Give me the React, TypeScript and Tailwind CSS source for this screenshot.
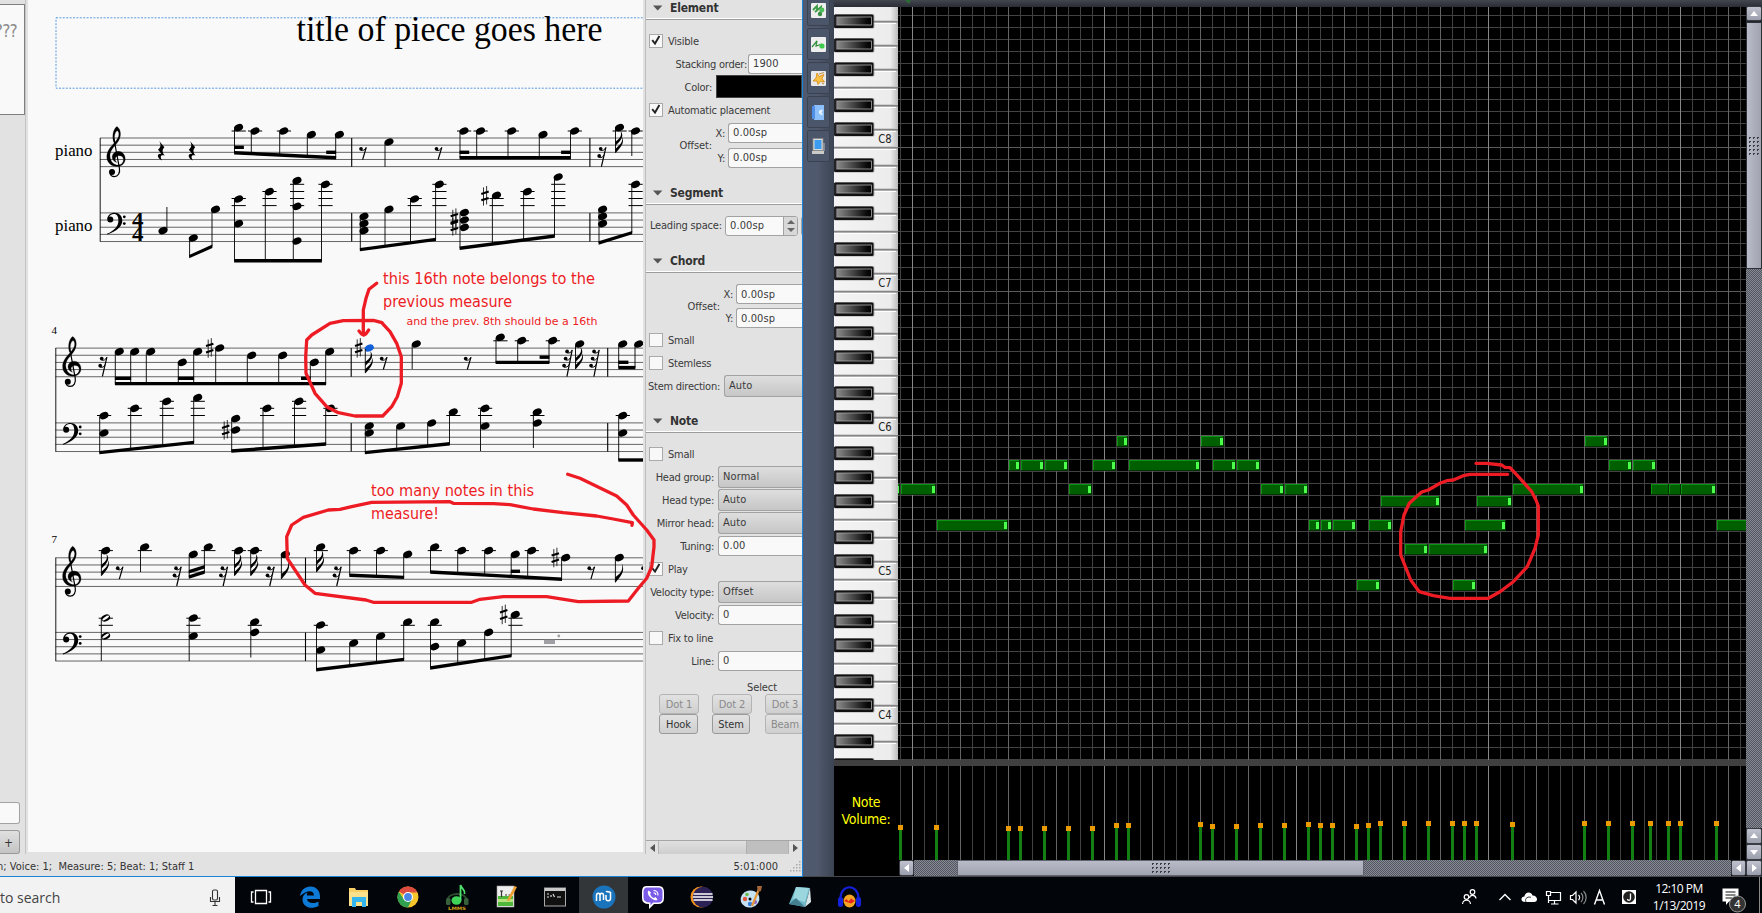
import React from "react";

type Pt = [number, number];

const UI = "font-['DejaVu_Sans_Condensed','DejaVu_Sans',sans-serif]";

/* ---------- score drawing primitives ---------- */

function Head({ x, y, c = "#000", half = false }: { x: number; y: number; c?: string; half?: boolean }) {
  if (half)
    return (
      <g transform={`translate(${x} ${y}) rotate(-22)`}>
        <ellipse rx="4.6" ry="3.3" fill="#000" />
        <ellipse rx="3.9" ry="1.3" fill="#f9f9f9" transform="rotate(-12)" />
      </g>
    );
  return <ellipse rx="4.7" ry="3.4" transform={`translate(${x} ${y}) rotate(-24)`} fill={c} />;
}

function Sharp({ x, y }: { x: number; y: number }) {
  return (
    <g transform={`translate(${x} ${y})`} stroke="#000">
      <path d="M-1.5 -8.6V9.6M1.6 -10V8.4" strokeWidth="0.8" />
      <path d="M-3.7 -2.1L3.7 -4.5M-3.7 4.3L3.7 1.9" strokeWidth="2.1" />
    </g>
  );
}

function Rest({ x, y, n }: { x: number; y: number; n: number }) {
  const h = n === 1 ? 12.7 : n === 2 ? 19.6 : 27;
  const top = 2.5 + (n - 1) * 0.6;
  const rows = Array.from({ length: n }, (_, i) => i);
  return (
    <g transform={`translate(${x} ${y})`}>
      <path d={`M${top + 0.8} 0.3L${-0.4 - (n - 1) * 0.2} ${h}`} stroke="#000" strokeWidth="1.2" />
      {rows.map((i) => {
        const dx = -i * 1.5 + (n - 1) * 0.7;
        return (
          <g key={i} transform={`translate(${dx} ${i * 7.1})`}>
            <circle cx="-2" cy="1.8" r="1.85" />
            <path d="M-2 3.2C0 4 2 3 3 0.6" fill="none" stroke="#000" strokeWidth="1" />
          </g>
        );
      })}
    </g>
  );
}

function QuarterRest({ x, y }: { x: number; y: number }) {
  return (
    <path
      transform={`translate(${x} ${y})`}
      d="M-2 -9.8L3.2 -3.6C0.6 -0.8 1.1 1.6 3.6 4.8C-0.2 3.4 -1.7 5.6 0.9 9.6C-4.8 7 -4.4 2 0.2 3L-3.2 -1C-0.2 -3.6 0 -6 -2 -9.8Z"
    />
  );
}

function Flags({ x, y, n }: { x: number; y: number; n: number }) {
  return (
    <g transform={`translate(${x} ${y})`}>
      <path d={n === 1 ? "M0 0.5V-5C3 -8 8.6 -10 6.4 -19C10 -11 6 -7 0 0.5Z" : "M0 0.5V-4C3 -7 8 -9.5 6.4 -16C9.4 -10 6 -6.6 0 0.5Z"} />
      {n === 2 && <path d="M0 -7V-11C3 -14 7 -15.5 5 -22C9 -16.5 6 -13 0 -7Z" />}
    </g>
  );
}

function Treble({ x, y }: { x: number; y: number }) {
  return (
    <g transform={`translate(${x} ${y})`} fill="none" stroke="#000" strokeLinecap="round">
      <path
        d="M6.6 15.5C4.4 7.5 7.4 1.4 9.9 0C12.6 1.6 14.2 6 13.2 10C12 15.4 8.2 18.4 5.4 22.2C3 25.6 2.6 28.6 3.2 31.4C4.2 35.8 7.4 38.4 11 38.4C14.6 38.4 16.8 35.6 16.4 32.2C16 29.6 13.6 28.6 11.2 29.2C8 30 7.2 33.4 9.8 35.8C4.8 34.6 3.6 28.4 7.6 25.8C12.8 22.8 18.2 26.6 18.2 32.2C18.2 37 14.6 39.9 10 39.9C4.2 39.9 -0.2 36 -0.2 30.2C-0.2 24.6 3.2 20.8 7.2 16.4C10.4 12.8 12 10.6 11.9 7.4C11.8 5.4 11 4.4 10.2 4.2C8 5.2 6.8 9.6 7.8 15Z"
        fill="#000"
        stroke="#000"
        strokeWidth="0.25"
      />
      <path d="M6.9 12L12.4 41.5C13.4 46.6 10.8 50 7.4 50C5.2 50 3.6 48.8 3.2 47" strokeWidth="1.2" />
      <circle cx="5" cy="45.4" r="3" fill="#000" stroke="none" />
    </g>
  );
}

function Bass({ x, y }: { x: number; y: number }) {
  return (
    <g transform={`translate(${x} ${y})`}>
      <circle cx="3.3" cy="6.6" r="3" />
      <path d="M0.4 6.4C0.4 2.2 3.6 -0.2 7.6 -0.2C12.2 -0.2 15.3 3 15.3 7.6C15.3 13.6 9.6 18.4 0.2 21.6L-0.1 20.8C7.2 17.6 11.4 13.4 11.4 7.4C11.4 3.4 10 0.9 7 0.9C4.4 0.9 2.4 2.4 1.8 4.8Z" />
      <circle cx="17.3" cy="3.8" r="1.4" />
      <circle cx="17.3" cy="10.6" r="1.4" />
    </g>
  );
}

function Staff({ x, y }: { x: number; y: number }) {
  return (
    <g stroke="#000" strokeWidth="0.6">
      {[0, 1, 2, 3, 4].map((i) => (
        <path key={i} d={`M${x} ${y + i * 7.16}H643`} />
      ))}
    </g>
  );
}

function Beam({ a, b }: { a: Pt; b: Pt }) {
  return <path d={`M${a[0] - 0.4} ${a[1] - 1.7}L${b[0] + 0.4} ${b[1] - 1.7}V${b[1] + 1.7}L${a[0] - 0.4} ${a[1] + 1.7}Z`} />;
}

type Group = { notes: [number, number, number[]][]; a: Pt; b: Pt; subs?: [number, number, number][] };

function BeamGroup({ g }: { g: Group }) {
  return (
    <g>
      {g.notes.map(([x, stem, ys], i) => {
        const end = g.a[1] + ((stem - g.a[0]) / (g.b[0] - g.a[0])) * (g.b[1] - g.a[1]);
        return (
          <g key={i}>
            {ys.map((y) => (
              <Head key={y} x={x} y={y} />
            ))}
            <path d={`M${stem} ${Math.min(...ys) + 1}V${end}`} stroke="#000" strokeWidth="0.9" />
          </g>
        );
      })}
      <Beam a={g.a} b={g.b} />
      {g.subs?.map(([x1, x2, y]) => (
        <Beam key={x1} a={[x1, y]} b={[x2, y]} />
      ))}
    </g>
  );
}

const groups: Group[] = [
  { notes: [[238.6, 234.5, [127.7]], [255, 251.3, [131]], [283.8, 279.7, [131]], [311.4, 307.3, [134.7]], [339.4, 335.7, [134.7]]], a: [234.5, 152.7], b: [335.7, 157.7], subs: [[234.5, 243.5, 147.3], [326.6, 335.7, 152.3]] },
  { notes: [[464, 460, [131]], [480.5, 476.7, [131]], [511.7, 508, [131]], [543, 539.3, [134.7]], [574.7, 570.5, [131]]], a: [460, 157.7], b: [570.5, 157.7], subs: [[460, 468.8, 152.3], [561.5, 570.5, 152.3]] },
  { notes: [[193.3, 189.6, [238]], [215.5, 212, [209.3]]], a: [189.6, 256.6], b: [212, 246.2] },
  { notes: [[238.6, 234.5, [199, 223.7]], [269.4, 265.3, [191.7]], [297, 293.3, [180.7, 206.3, 241]], [325.4, 321.5, [184.3]]], a: [234.5, 260.8], b: [321.5, 260.8] },
  { notes: [[364, 360.3, [216.3, 223.7, 230.7]], [389, 385, [209.3]], [414.6, 410.5, [199]], [439.3, 435.6, [184.3]]], a: [360.3, 249.6], b: [435.6, 239.4] },
  { notes: [[464.4, 460, [212.7, 220, 227.3]], [496.5, 492.4, [195.3]], [527.4, 523.6, [191.7]], [558.2, 554.5, [177]]], a: [460, 248.2], b: [554.5, 236] },
  { notes: [[602.6, 599, [209.3, 216.3, 223.7]], [635.5, 631.8, [184.3]]], a: [599, 243], b: [631.8, 232.6] },
  { notes: [[119.3, 115.3, [351.7]], [134.7, 130.7, [351.7]], [150.7, 146.3, [351.7]], [182.3, 178.3, [362.3]], [197.7, 193.7, [351.7]], [219.7, 215.7, [348]], [251.7, 247.3, [355.3]], [282.7, 278.7, [355.3]], [314.3, 310.3, [362.3]], [329.7, 325.7, [351.7]]], a: [115.3, 383.6], b: [325.7, 383.6], subs: [[115.3, 130.7, 378.3], [178.3, 193.7, 378.3], [301.4, 310.3, 378.3]] },
  { notes: [[500.3, 496, [337.3]], [521.7, 517.7, [340.7]], [552.7, 549, [340.7]]], a: [496, 362.4], b: [549, 362.4], subs: [[540, 549, 357.2]] },
  { notes: [[622.7, 618.7, [344]], [638.7, 635, [344]]], a: [618.7, 367.6], b: [635, 367.6], subs: [[618.7, 628, 362.3]] },
  { notes: [[104, 99.7, [415.7, 433]], [134.7, 130.7, [408.3]], [166.7, 162.7, [401.3]], [197.7, 193.7, [397.7]]], a: [99.7, 452.6], b: [193.7, 442.4] },
  { notes: [[235.7, 231.7, [418.7, 430]], [267, 263, [408.3]], [299, 294.5, [401.3]], [330.3, 325.7, [408.3]]], a: [231.7, 451], b: [325.7, 444] },
  { notes: [[369.3, 365.3, [426, 433]], [400.7, 396.7, [426]], [431.7, 427.7, [423]], [453.3, 449.5, [412]]], a: [365.3, 452.6], b: [449.5, 443.8] },
  { notes: [[622.7, 618.7, [415.7, 433]]], a: [618.7, 460], b: [643, 460] },
  { notes: [[353.7, 349.7, [550.7]], [380.7, 376.5, [550.7]], [407.7, 403.7, [554.3]]], a: [349.7, 575.3], b: [403.7, 577.4] },
  { notes: [[434.7, 430.5, [547]], [461.7, 457.7, [550.7]], [488.7, 484.7, [550.7]], [515.3, 511.2, [554.3]], [531.7, 527.7, [550.7]], [565.7, 561.6, [557.7]]], a: [430.5, 572], b: [561.6, 579.2], subs: [[511.2, 519.6, 571.3]] },
  { notes: [[193.3, 189.2, [554.3]], [208.3, 204.4, [547]]], a: [189.2, 577], b: [204.4, 572] },
  { notes: [[320.7, 316.5, [625, 650]], [353.7, 349.7, [643]], [380.7, 376.5, [636]], [407.7, 403.7, [622]]], a: [316.5, 669.8], b: [403.7, 659.4] },
  { notes: [[434.7, 430.5, [622, 646.7]], [461.7, 457.7, [643]], [488.7, 484.7, [632.3]], [515.3, 511.2, [614.7]]], a: [430.5, 668], b: [511.2, 655.6] },
];

/* x, stem x, head ys, stem end, flag count */
const singles: [number, number, number[], number, number][] = [
  [389, 385, [142], 166.7, 0],
  [619.5, 615.5, [127.7], 152.7, 2],
  [635.5, 631.8, [131], 156, 0],
  [416.3, 412.2, [344], 369, 0],
  [579.7, 575.5, [344], 369, 2],
  [485, 480.5, [408.3, 426], 451, 0],
  [537.3, 533.4, [412, 423], 448, 0],
  [105.7, 101.4, [550.7], 575.7, 2],
  [144.7, 140.5, [547], 572, 0],
  [238.7, 234.5, [550.7], 575.7, 2],
  [254.7, 250.7, [550.7], 575.7, 2],
  [285.3, 281.4, [554.3], 579, 1],
  [320.7, 316.5, [547], 572, 2],
  [619.3, 615.4, [557.7], 582.3, 1],
  [193.3, 189.2, [618, 636], 661, 0],
  [254.7, 250.8, [622, 632.3], 657.5, 0],
];

/* centre x, ledger ys */
const ledgers: [number, number[]][] = [
  [238.6, [131]], [255, [131]], [283.8, [131]], [464, [131]], [480.5, [131]], [511.7, [131]], [574.7, [131]], [619.5, [131]], [635.5, [131]],
  [238.6, [198.5, 205.6]], [269.4, [191.5, 198.5, 205.6]], [297, [184.3, 191.5, 198.5, 205.6]], [325.4, [184.3, 191.5, 198.5, 205.6]],
  [414.6, [198.5, 205.6]], [439.3, [184.3, 191.5, 198.5, 205.6]], [496.5, [198.5, 205.6]], [527.4, [191.5, 198.5, 205.6]], [558.2, [184.3, 191.5, 198.5, 205.6]], [635.5, [184.3, 191.5, 198.5, 205.6]],
  [500.3, [340.8]], [521.7, [340.8]], [552.7, [340.8]],
  [104, [415.5]], [134.7, [408.3, 415.5]], [166.7, [401.3, 408.3, 415.5]], [197.7, [401.3, 408.3, 415.5]], [267, [408.3, 415.5]], [299, [401.3, 408.3, 415.5]], [330.3, [408.3, 415.5]],
  [453.3, [415.5]], [485, [408.3, 415.5]], [537.3, [415.5]], [622.7, [415.5]],
  [105.7, [550.6]], [144.7, [550.6]], [208.3, [550.6]], [238.7, [550.6]], [254.7, [550.6]], [320.7, [550.6]], [353.7, [550.6]], [380.7, [550.6]], [434.7, [550.6]], [461.7, [550.6]], [488.7, [550.6]], [531.7, [550.6]],
  [105.7, [618.2, 625.3]], [193.3, [618.2, 625.3]], [254.7, [625.3]], [320.7, [625.3]], [407.7, [625.3]], [434.7, [625.3]], [515.3, [618.2, 625.3]],
];

function Score() {
  return (
    <svg width="615" height="852" viewBox="28 0 615 852" className="block bg-[#f9f9f9]">
      <rect x="56" y="17.8" width="700" height="70.4" fill="none" stroke="#5b9ce0" strokeWidth="1" strokeDasharray="2 1.4" />
      <g fontFamily="Liberation Serif, serif">
        <text x="296.5" y="40.6" fontSize="35" textLength="306" lengthAdjust="spacingAndGlyphs">title of piece goes here</text>
        <text x="55" y="156" fontSize="17.5" textLength="37.5" lengthAdjust="spacingAndGlyphs">piano</text>
        <text x="55" y="231" fontSize="17.5" textLength="37.5" lengthAdjust="spacingAndGlyphs">piano</text>
        <text x="51.5" y="333.6" fontSize="11">4</text>
        <text x="51.5" y="543.2" fontSize="11">7</text>
        <text x="132" y="227" fontSize="21.5" fontWeight="bold" textLength="11.5" lengthAdjust="spacingAndGlyphs">4</text>
        <text x="132" y="241.4" fontSize="21.5" fontWeight="bold" textLength="11.5" lengthAdjust="spacingAndGlyphs">4</text>
      </g>
      <Staff x={100} y={138} />
      <Staff x={100} y={212.9} />
      <Staff x={55.5} y={348.1} />
      <Staff x={55.5} y={422.9} />
      <Staff x={55.5} y={557.8} />
      <Staff x={55.5} y={632.4} />
      <path d="M100.2 138V241.6M55.8 348V451.6M55.8 557.7V661" stroke="#000" strokeWidth="0.9" />
      <path d="M351.7 138V166.7M351.7 212.9V241.6M589.9 138V166.7M589.9 212.9V241.6M351.2 348V376.8M351.2 422.9V451.6M607.7 348V376.8M607.7 422.9V451.6M305.5 557.8V586.4M305.5 632.4V661" stroke="#000" strokeWidth="1.1" />
      <Treble x={107} y={126.6} />
      <Treble x={62.8} y={336.4} />
      <Treble x={62.8} y={546.2} />
      <Bass x={107} y={213} />
      <Bass x={62.9} y={423.2} />
      <Bass x={62.9} y={632.8} />
      <g stroke="#000" strokeWidth="1">
        {ledgers.map(([x, ys], i) => (
          <path key={i} d={ys.map((y) => `M${x - 7} ${y}H${x + 7.2}`).join("")} />
        ))}
      </g>
      {groups.map((g, i) => (
        <BeamGroup key={i} g={g} />
      ))}
      <Beam a={[189.2, 571.8]} b={[204.4, 566.8]} />
      {singles.map(([x, sx, ys, end, fl], i) => (
        <g key={i}>
          {ys.map((y) => (
            <Head key={y} x={x} y={y} />
          ))}
          <path d={`M${sx} ${ys[0] + 1}V${end}`} stroke="#000" strokeWidth="0.9" />
          {fl > 0 && <Flags x={sx} y={end} n={fl} />}
        </g>
      ))}
      <Head x={163} y={230.7} />
      <path d="M166.9 230V207" stroke="#000" strokeWidth="0.9" />
      <Head x={369.3} y={348} c="#0f5fdc" />
      <path d="M365.3 349V373" stroke="#000" strokeWidth="0.9" />
      <Flags x={365.3} y={373} n={2} />
      <Head x={105.7} y={618} half />
      <Head x={105.7} y={636} half />
      <path d="M101.3 619V661" stroke="#000" strokeWidth="0.9" />
      {([[485, 196], [454.3, 218.4], [454.3, 226], [209.7, 348.2], [358.7, 348], [225.7, 430], [555.3, 557.7], [503.7, 614.6]] as Pt[]).map(([x, y], i) => (
        <Sharp key={i} x={x} y={y} />
      ))}
      <QuarterRest x={161.2} y={150.8} />
      <QuarterRest x={192} y={150.8} />
      {([[363, 147, 1], [438.5, 147, 1], [602, 147, 2], [103, 356.8, 2], [383.7, 356.8, 1], [467.7, 356.8, 1], [567.7, 349.6, 3], [594.7, 349.6, 3], [119.7, 566.4, 1], [177.3, 566.4, 2], [223.7, 566.4, 2], [270.3, 566.4, 2], [337.3, 566.4, 2], [591.3, 566.4, 1], [645, 566.4, 1]] as [number, number, number][]).map(([x, y, n], i) => (
        <Rest key={i} x={x} y={y} n={n} />
      ))}
      <rect x="544" y="639.8" width="11" height="4.2" fill="#a0a0a4" />
      <circle cx="558.8" cy="636" r="1.4" fill="#a0a0a4" />
    </svg>
  );
}

/* ---------- inspector ---------- */

function Header({ title, className }: { title: string; className: string }) {
  return (
    <div className={`flex h-[22px] shrink-0 flex-col ${className}`}>
      <div className="flex h-5 items-center pl-[7px]">
        <svg width="10" height="6" className="mr-[7px]"><path d="M0 0.5H9.4L4.7 5.5Z" fill="#555" /></svg>
        <span className="text-[12px] font-bold leading-5 tracking-[-0.2px] text-[#333]">{title}</span>
      </div>
      <div className="h-px bg-white" />
      <div className="h-px bg-[#9c9c9c]" />
    </div>
  );
}

function Check({ label, on = false, className = "" }: { label: string; on?: boolean; className?: string }) {
  return (
    <div className={`flex h-[23px] shrink-0 items-center pl-[3px] ${className}`}>
      <span className="flex size-[14px] items-center justify-center border border-[#aaa] bg-[#f8f8f8]">
        {on && (
          <svg width="10" height="11" viewBox="0 0 10 11"><path d="M1.2 5.2L4 8.6L8.4 1" fill="none" stroke="#222" strokeWidth="1.9" /></svg>
        )}
      </span>
      <span className="ml-[5px] whitespace-pre pt-[2px] tracking-[-0.22px]">{label}</span>
    </div>
  );
}

function Field({ value, combo = false }: { value: string; combo?: boolean }) {
  return (
    <div
      className={
        combo
          ? "flex h-[22px] flex-1 items-center rounded-l-[3px] border border-r-0 border-[#a2a2a2] bg-gradient-to-b from-[#dedede] to-[#c6c6c6] pl-1"
          : "flex h-5 flex-1 items-center rounded-l-[3px] border border-r-0 border-[#a2a2a2] bg-[#f9f9f9] pl-1"
      }
    >
      <span className="whitespace-pre pt-px tracking-[0.1px]">{value}</span>
    </div>
  );
}

function Row({ label, w, children, className = "" }: { label: string; w: string; children?: React.ReactNode; className?: string }) {
  return (
    <div className={`flex h-[23px] shrink-0 items-center ${className}`}>
      <span className={`shrink-0 whitespace-nowrap pt-[2px] text-right tracking-[-0.25px] ${w}`}>{label}</span>
      {children}
    </div>
  );
}

function Btn({ t, className, off = false }: { t: string; className: string; off?: boolean }) {
  return (
    <span className={`flex h-5 shrink-0 items-center justify-center rounded-[3px] border bg-gradient-to-b from-[#e2e2e2] to-[#cfcfcf] pt-px ${off ? "border-[#b4b4b4] text-[#8a8a8a]" : "border-[#999] text-[#333]"} ${className}`}>{t}</span>
  );
}

function Inspector() {
  return (
    <div className="flex h-[854px] w-[157px] shrink-0 flex-col overflow-hidden border-l border-[#bdbdbd] bg-[#e2e2e2] text-[11px] leading-[14px] tracking-[-0.1px] text-[#3a3a3a]">
      <Header title="Element" className="-mt-[2px]" />
      <Check label="Visible" on className="mt-[9px]" />
      <Row label="Stacking order:" w="w-[101px] mr-px"><Field value="1900" /></Row>
      <Row label="Color:" w="w-[66px] mr-1"><div className="h-[23px] flex-1 border border-[#444] bg-black" /></Row>
      <Check label="Automatic placement" on />
      <div className="-mt-px flex h-[50px] shrink-0 items-center">
        <span className="w-[66px] shrink-0 pt-[2px] text-right">Offset:</span>
        <div className="flex flex-1 flex-col">
          <Row label="X:" w="w-[13px] mr-[3px]" className="mb-px mt-px"><Field value="0.00sp" /></Row>
          <Row label="Y:" w="w-[13px] mr-[3px]" className="mb-px mt-px"><Field value="0.00sp" /></Row>
        </div>
      </div>
      <Header title="Segment" className="mt-[13px]" />
      <div className="mt-[9px] flex h-[23px] shrink-0 items-center pl-1">
        <span className="w-[71px] shrink-0 whitespace-nowrap pt-px text-right tracking-[-0.2px]">Leading space:</span>
        <div className="ml-1 flex h-5 w-[73px] shrink-0 items-stretch overflow-hidden rounded-[3px] border border-[#a2a2a2] bg-[#f9f9f9]">
          <span className="flex flex-1 items-center pl-1 pt-px tracking-[0.1px]">0.00sp</span>
          <span className="flex w-[14px] flex-col items-center justify-center gap-[4px] border-l border-[#a2a2a2] bg-[#d8d8d8]">
            <svg width="8" height="4"><path d="M0 4H8L4 0Z" fill="#666" /></svg>
            <svg width="8" height="4"><path d="M0 0H8L4 4Z" fill="#666" /></svg>
          </span>
        </div>
        <div className="ml-[3px] h-5 w-3 shrink-0 rounded-l-[3px] border border-[#a2a2a2] bg-[#ddd]" />
      </div>
      <Header title="Chord" className="mt-[14px]" />
      <div className="mt-[9px] flex h-12 shrink-0 items-center">
        <span className="w-[74px] shrink-0 pt-px text-right">Offset:</span>
        <div className="flex flex-1 flex-col gap-px">
          <Row label="X:" w="w-[13px] mr-[3px]"><Field value="0.00sp" /></Row>
          <Row label="Y:" w="w-[13px] mr-[3px]"><Field value="0.00sp" /></Row>
        </div>
      </div>
      <Check label="Small" className="-mt-[2px]" />
      <Check label="Stemless" />
      <Row label="Stem direction:" w="w-[74px] mr-1"><Field combo value="Auto" /></Row>
      <Header title="Note" className="mt-[14px]" />
      <Check label="Small" className="mt-[9px]" />
      <Row label="Head group:" w="w-[68px] mr-1"><Field combo value="Normal" /></Row>
      <Row label="Head type:" w="w-[68px] mr-1"><Field combo value="Auto" /></Row>
      <Row label="Mirror head:" w="w-[68px] mr-1"><Field combo value="Auto" /></Row>
      <Row label="Tuning:" w="w-[68px] mr-1"><Field value="0.00" /></Row>
      <Check label="Play" on />
      <Row label="Velocity type:" w="w-[68px] mr-1"><Field combo value="Offset" /></Row>
      <Row label="Velocity:" w="w-[68px] mr-1"><Field value="0" /></Row>
      <Check label="Fix to line" />
      <Row label="Line:" w="w-[68px] mr-1"><Field value="0" /></Row>
      <div className="mt-[9px] h-[13px] shrink-0 pl-[101px]">Select</div>
      <div className="flex h-5 shrink-0 pl-[13px]">
        <Btn t="Dot 1" off className="mr-[13px] w-10" />
        <Btn t="Dot 2" off className="mr-[13px] w-10" />
        <Btn t="Dot 3" off className="w-10" />
      </div>
      <div className="flex h-5 shrink-0 pl-[13px]">
        <Btn t="Hook" className="mr-[14px] w-[39px]" />
        <Btn t="Stem" className="mr-[15px] w-[38px]" />
        <Btn t="Beam" off className="w-10" />
      </div>
      <div className="flex-1" />
      <div className="flex h-[14px] shrink-0 border-t border-[#a6a6a6]">
        <span className="flex w-[13px] items-center justify-center border-r border-[#b4b4b4]"><svg width="5" height="8"><path d="M5 0V8L0 4Z" fill="#555" /></svg></span>
        <span className="w-[88px] border-r border-[#b0b0b0] bg-gradient-to-b from-[#e0e0e0] to-[#cecece]" />
        <span className="flex-1 bg-[#bfbfbf]" />
        <span className="flex w-[14px] items-center justify-center border-l border-[#b4b4b4]"><svg width="5" height="8"><path d="M0 0V8L5 4Z" fill="#555" /></svg></span>
      </div>
    </div>
  );
}

/* ---------- piano roll ---------- */

const rollNotes: [number, number, number, boolean][] = [
  [890, 900, 484, true], [901, 936, 484, true], [937, 1008, 520, true], [1009, 1020, 460, true], [1021, 1044, 460, true], [1045, 1068, 460, true],
  [1069, 1092, 484, true], [1093, 1116, 460, true], [1117, 1128, 436, true], [1129, 1200, 460, true], [1201, 1224, 436, true], [1213, 1236, 460, true],
  [1237, 1260, 460, true], [1261, 1284, 484, true], [1285, 1308, 484, true], [1309, 1320, 520, true], [1321, 1332, 520, true], [1333, 1356, 520, true],
  [1357, 1380, 580, true], [1369, 1392, 520, true], [1381, 1440, 496, true], [1405, 1428, 544, true], [1429, 1488, 544, true], [1453, 1476, 580, true],
  [1465, 1506, 520, true], [1477, 1512, 496, true], [1513, 1584, 484, true], [1585, 1608, 436, true], [1609, 1632, 460, true], [1633, 1656, 460, true],
  [1651, 1669, 484, false], [1669, 1681, 484, false], [1681, 1716, 484, true], [1717, 1790, 520, true],
];

const volumes: Pt[] = [
  [900, 827], [936, 827], [1008, 828], [1020, 828], [1044, 828], [1068, 828], [1092, 828], [1116, 825], [1128, 825], [1200, 824], [1212, 826], [1236, 826],
  [1260, 825], [1284, 825], [1308, 824], [1320, 825], [1332, 825], [1356, 826], [1368, 825], [1380, 823], [1404, 823], [1428, 823], [1452, 823], [1464, 823],
  [1476, 823], [1512, 824], [1584, 823], [1608, 823], [1632, 823], [1650, 823], [1668, 823], [1680, 823], [1716, 823],
];

const vlines = Array.from({ length: 71 }, (_, i) => 900 + i * 12);
const vcol = (x: number) => ((x - 912) % 192 === 0 ? "#868686" : (x - 912) % 48 === 0 ? "#646464" : "#424242");

function Keyboard() {
  const octs = [-141, 3, 147, 291, 435, 579, 723];
  return (
    <svg width="64" height="753" viewBox="834 7 64 753" className="block shrink-0">
      <defs>
        <linearGradient id="wk"><stop offset="0" stopColor="#f4f4f4" /><stop offset="0.88" stopColor="#ececec" /><stop offset="1" stopColor="#bcbcbc" /></linearGradient>
        <linearGradient id="bk"><stop offset="0" stopColor="#8c8c8c" /><stop offset="0.85" stopColor="#0c0c0c" /><stop offset="1" stopColor="#000" /></linearGradient>
      </defs>
      <rect x="834" y="0" width="64" height="760" fill="url(#wk)" />
      {octs.map((o) => (
        <g key={o}>
          {[0, 18, 42, 66, 84, 102, 126].map((d) => (
            <g key={d}>
              <rect x="834" y={o + d - 0.7} width="63" height="1" fill="#c4c4c4" />
              <rect x="834" y={o + d} width="64" height="1.6" fill="#858585" />
              <rect x="834" y={o + d + 2} width="62" height="1" fill="#fff" />
            </g>
          ))}
          {[18, 42, 66, 102, 126].map((d) => (
            <g key={d}>
              <rect x="834" y={o + d - 7} width="40.4" height="14.6" rx="1.5" fill="#777" opacity="0.6" />
              <rect x="834" y={o + d - 6.5} width="39.5" height="13.5" rx="1.5" fill="#111" />
              <rect x="836.5" y={o + d - 4} width="35" height="8" fill="url(#bk)" stroke="#a9a9a9" strokeWidth="0.8" />
              <rect x="834" y={o + d - 5.5} width="2.4" height="11" fill="#222" />
            </g>
          ))}
        </g>
      ))}
      {[8, 7, 6, 5, 4].map((n, i) => (
        <text key={n} x="878.2" y={143.4 + i * 144} fontSize="12" fill="#222" fontFamily="DejaVu Sans Condensed, sans-serif" textLength="13.4" lengthAdjust="spacingAndGlyphs">{"C" + n}</text>
      ))}
    </svg>
  );
}

function Roll() {
  return (
    <svg width="848" height="753" viewBox="898 7 848 753" className="block shrink-0 bg-black" shapeRendering="crispEdges">
      {Array.from({ length: 64 }, (_, i) => 3 + i * 12).map((y) => (
        <rect key={y} x="898" y={y} width="848" height="1" fill={(y - 3) % 144 === 0 ? "#5c5c5c" : "#424242"} />
      ))}
      {vlines.map((x) => (
        <rect key={x} x={x} y="7" width="1" height="753" fill={vcol(x)} />
      ))}
      {rollNotes.map(([a, b, y, end], i) => (
        <g key={i}>
          <rect x={a} y={y} width={b - a} height="11" fill="#033003" />
          <rect x={a} y={y} width={b - a - 1} height="10" fill="#0a9410" />
          <rect x={a + 1} y={y + 1} width={b - a - 2} height="9" fill="#006000" />
          {end && <rect x={b - 4} y={y + 2} width="3" height="7" fill="#4cff4c" />}
        </g>
      ))}
    </svg>
  );
}

function Volumes() {
  return (
    <svg width="848" height="94" viewBox="898 766 848 94" className="block shrink-0 bg-black" shapeRendering="crispEdges">
      {vlines.map((x) => (
        <rect key={x} x={x} y="766" width="1" height="94" fill={vcol(x)} />
      ))}
      {volumes.map(([x, y]) => (
        <g key={x}>
          <rect x={x - 1} y={y} width="3" height={860 - y} fill="#148014" />
          <rect x={x - 2} y={y - 2} width="5" height="5" fill="#eb9b00" />
        </g>
      ))}
    </svg>
  );
}

const DITHER = "bg-[#7f828c] bg-[repeating-conic-gradient(#868a95_0_25%,#53565e_0_50%)] bg-[length:2px_2px]";

function Arrow({ d, className }: { d: string; className: string }) {
  return (
    <span className={`flex shrink-0 items-center justify-center rounded-[2px] border border-[#3a3c44] bg-gradient-to-b from-[#c0c2ce] to-[#9b9eac] ${className}`}>
      <svg width="8" height="8"><path d={d} fill="#fff" /></svg>
    </span>
  );
}

function Grip({ cols, rows }: { cols: number; rows: number }) {
  return (
    <svg width={cols * 4} height={rows * 4} shapeRendering="crispEdges">
      {Array.from({ length: cols * rows }, (_, i) => (
        <path key={i} transform={`translate(${(i % cols) * 4 + 1} ${Math.floor(i / cols) * 4 + 1})`} d="M0 0H2V1H1V2H0Z" fill="#3a3c44" />
      ))}
    </svg>
  );
}

const LEFT = "M6 0V8L1 4Z";
const RIGHT = "M2 0V8L7 4Z";
const UP = "M0 6H8L4 1Z";
const DOWN = "M0 2H8L4 7Z";

function SideButton({ children, className = "" }: { children: React.ReactNode; className?: string }) {
  return <div className={`flex h-8 w-[23px] shrink-0 items-center justify-center rounded-[2px] border border-[#3a4252] bg-[#4c566a] ${className}`}>{children}</div>;
}

function Daw() {
  return (
    <div className="flex h-[877px] w-[959px] shrink-0 border-b border-[#45454a] bg-black">
      <div className="flex w-[31px] shrink-0 flex-col items-center gap-[2px] overflow-hidden bg-gradient-to-r from-[#4f5a70] via-[#4f586c] to-[#3b4452] pr-px">
        <SideButton className="-mt-[6px]">
          <svg width="15" height="15"><rect width="15" height="15" rx="1" fill="#eee" /><path d="M2 7L6 3V8M4 9L10 4L9 12" stroke="#3c9a45" strokeWidth="1.8" fill="none" /><circle cx="11" cy="7" r="2.4" fill="#4fbf5a" /><circle cx="9" cy="11" r="2.2" fill="#388f42" /></svg>
        </SideButton>
        <SideButton>
          <svg width="15" height="15"><rect width="15" height="15" rx="1" fill="#eee" /><path d="M1 10L6 4L5 9L11 7" stroke="#2e8f3a" strokeWidth="1.2" fill="none" /><circle cx="11" cy="9" r="2.6" fill="#3ecb4c" /></svg>
        </SideButton>
        <SideButton>
          <svg width="15" height="15"><rect width="15" height="15" rx="1" fill="#e8e8ea" /><path d="M6 2L8 5.5L13 3.5L11 7.5L13.5 11L9.5 10.5L7 13.5L6 10L2 10L5 7Z" fill="#f9bf45" stroke="#d58a12" strokeWidth="0.8" /><path d="M8 3L13 1.500M11 12L13 13" stroke="#b07a20" strokeWidth="0.8" /></svg>
        </SideButton>
        <SideButton>
          <svg width="15" height="17"><path d="M3 1H13V16H3Z" fill="#8dc0fa" /><path d="M1 2H4V15H1Z" fill="#4f8fe8" /><path d="M12 6C7 4 6 11 12 11L10.500 8.500Z" fill="#e6f2ff" /></svg>
        </SideButton>
        <SideButton>
          <svg width="15" height="17"><rect x="2" y="0.5" width="10" height="12" fill="#d9dbd8" stroke="#888" strokeWidth="0.8" /><rect x="3.5" y="2" width="7" height="9" fill="#3c9cf2" /><rect x="1" y="13" width="12" height="3" fill="#c9cbc8" /><path d="M13 5V13" stroke="#bbb" /></svg>
        </SideButton>
      </div>
      <div className="flex w-[928px] shrink-0 flex-col">
        <div className="flex h-[7px] shrink-0 justify-start bg-gradient-to-b from-[#43454f] to-[#2b2d36] pl-[71px]">
          <svg width="6" height="4"><path d="M0 0H6L4 4Z" fill="#2a6a35" /></svg>
        </div>
        <div className="flex h-[869px] shrink-0">
          <div className="flex w-[912px] shrink-0 flex-col">
            <div className="flex h-[753px] shrink-0"><Keyboard /><Roll /></div>
            <div className="h-[6px] shrink-0 bg-[#404040]" />
            <div className="flex h-[110px] shrink-0">
              <div className="flex w-16 shrink-0 flex-col items-center pt-[28px] text-center text-[14px] leading-[17px] tracking-[-0.3px] text-[#ff0]">
                <span>Note</span><span>Volume:</span>
              </div>
              <div className="flex w-[848px] shrink-0 flex-col">
                <Volumes />
                <div className="flex h-4 pl-px">
                  <Arrow d={LEFT} className="h-4 w-[15px]" />
                  <span className={`w-[43px] ${DITHER}`} />
                  <span className="flex w-[407px] items-center justify-center border border-[#60636e] bg-gradient-to-b from-[#b9bbc9] to-[#a0a3b0]">
                    <Grip cols={5} rows={3} />
                  </span>
                  <span className={`flex-1 ${DITHER}`} />
                  <Arrow d={LEFT} className="h-4 w-[15px]" />
                </div>
              </div>
            </div>
          </div>
          <div className="flex w-4 shrink-0 flex-col bg-[#24262e]">
            <Arrow d={UP} className="-mt-px h-[15px] w-4" />
            <div className="mt-px flex h-[247px] shrink-0 items-center justify-center border border-[#2e3038] bg-gradient-to-r from-[#b9bbc9] to-[#a0a3b0]">
              <Grip cols={3} rows={5} />
            </div>
            <div className={`flex-1 ${DITHER}`} />
            <Arrow d={UP} className="h-4 w-4" />
            <Arrow d={DOWN} className="h-4 w-4" />
            <Arrow d={RIGHT} className="h-4 w-4" />
          </div>
        </div>
      </div>
    </div>
  );
}

/* ---------- taskbar ---------- */

function TaskIcon({ children, active = false }: { children: React.ReactNode; active?: boolean }) {
  return (
    <span className={`flex h-9 w-[49px] shrink-0 items-center justify-center pt-1 ${active ? "bg-[#333639]" : ""}`}>
      <svg width="26" height="26" viewBox="0 0 26 26">{children}</svg>
    </span>
  );
}

function Taskbar() {
  return (
    <div className="flex h-9 bg-[#02050a] text-white">
      <div className="mr-px flex w-[235px] shrink-0 items-center bg-[#f2f2f2] pt-[5px] text-[#444]">
        <span className="w-[208px] font-['Open_Sans',sans-serif] text-[14px] tracking-[0px]">to search</span>
        <svg width="14" height="18" viewBox="0 0 14 18" fill="none" stroke="#333" strokeWidth="1.1"><rect x="4.5" y="1" width="5" height="10" rx="1.5" /><path d="M2.500 8V12.500H11.500V8M7 13V16.500M4.500 16.500H9.500" /></svg>
      </div>
      <TaskIcon><path d="M7.500 6.500H18.500V19.500H7.500ZM5.500 8H3.500V18H5.500M20.500 8H22.500V18H20.500" fill="none" stroke="#fff" strokeWidth="1.3" /></TaskIcon>
      <TaskIcon><path d="M3 12C4 6 8 2.500 13.500 2.500C19.500 2.500 23 7 23 12.500V15H10C10.500 19 16 20.500 21.500 17.500V22C14 26 5.500 23 5.500 15.500C5.500 12 7.500 9.500 10.500 8.500C10 9.500 9.800 10.500 9.800 11.500H17C17 6 10 5.500 3 12Z" fill="#0d7ad8" /></TaskIcon>
      <TaskIcon><path d="M3 4H9L10 6H22V22H3Z" fill="#f7cf64" /><path d="M3 8H22V22H3Z" fill="#fbe08b" /><path d="M6 13H20V23H16V18H10V23H6Z" fill="#35b5ee" /></TaskIcon>
      <TaskIcon><circle cx="13" cy="13" r="10.5" fill="#f5c52b" /><path d="M13 13L4 7.500A10.500 10.500 0 0 1 22.500 8.500H13Z" fill="#dd4b3e" /><path d="M3.800 7.800A10.500 10.500 0 0 0 13 23.500L17 15L9 15.500Z" fill="#2fa04f" /><circle cx="13" cy="13" r="5" fill="#fff" /><circle cx="13" cy="13" r="3.9" fill="#4a86e8" /></TaskIcon>
      <TaskIcon><path d="M3.500 16C4 8 22 8 22.500 16" fill="none" stroke="#2d4a2f" strokeWidth="1.8" /><rect x="2" y="14" width="4.500" height="7" rx="1.5" fill="#39603c" /><rect x="20" y="14" width="4.500" height="7" rx="1.5" fill="#39603c" /><ellipse cx="12.500" cy="16.500" rx="5" ry="4.200" fill="#3fd35a" /><path d="M16.500 16V1C17.500 5 21.500 5 20.500 10" fill="none" stroke="#4fe26a" strokeWidth="1.8" /><text x="4" y="25.500" fontSize="4.500" fontWeight="bold" fill="#d8a21a" fontFamily="DejaVu Sans, sans-serif" textLength="18" lengthAdjust="spacingAndGlyphs">LMMS</text></TaskIcon>
      <TaskIcon><rect x="4" y="2" width="17" height="21" fill="#eee" stroke="#999" strokeWidth="0.6" /><rect x="5" y="12" width="15" height="10" fill="#4fb83a" /><rect x="5" y="15" width="15" height="3" fill="#b5e27c" /><path d="M8.500 7V13M7 7H10M12 11H14M15.500 11H17.500" stroke="#333" strokeWidth="1.2" /><path d="M14.500 15L21.500 2L24 3L17 16L14.500 17.500Z" fill="#f0a030" /></TaskIcon>
      <TaskIcon><rect x="2.5" y="4" width="21" height="18" fill="#111" stroke="#aaa" /><rect x="3" y="4" width="20" height="3" fill="#c9c9c9" /><path d="M5 10H7M5 13H7M9 11V13M11 10L12.500 13M15 13H19" stroke="#ddd" strokeWidth="1.2" /></TaskIcon>
      <TaskIcon active><circle cx="13" cy="13" r="11.5" fill="#1a74bb" /><path d="M5.500 17V11.500C5.500 8.500 9 8.500 9 11.500V17M9 11.500C9 8.500 12.500 8.500 12.500 11.500V16M15 11V14.500C15 17.500 19.500 17.500 19.500 14.500V8.500C18 7 15.500 8.500 15.200 7" fill="none" stroke="#fff" strokeWidth="1.5" /></TaskIcon>
      <TaskIcon><path d="M6 2H19Q24 2 24 8V14Q24 20 18 20H14L9 25V20Q2 20 2 14V8Q2 2 6 2Z" fill="#fff" /><path d="M7 3.500H18.500Q22.500 3.500 22.500 8V14Q22.500 18.500 18 18.500H13L10.500 21.500V18.500Q3.500 18.500 3.500 13.500V8Q3.500 3.500 7 3.500Z" fill="#7a5be8" /><path d="M8.500 6.500C7 8 8 11.500 11 14C14 16.500 16.500 17 17.500 15.500L15.500 13L14 14C12 13.500 10.500 11.500 10.200 10L11 8.500Z" fill="#fff" /><path d="M13.500 6.500C16.500 6.500 18 8.500 18 11.500M13.500 8.700C15 8.700 15.800 9.600 15.800 11" fill="none" stroke="#fff" strokeWidth="1.1" /></TaskIcon>
      <TaskIcon><circle cx="12" cy="13" r="10.5" fill="#f7941e" /><circle cx="14" cy="13" r="10.3" fill="#2c2255" /><path d="M4.500 10H23.500M3.800 13H24M4.500 16H23.500" stroke="#fff" strokeWidth="1.5" /></TaskIcon>
      <TaskIcon><ellipse cx="12" cy="15" rx="9.5" ry="8.5" fill="#c6e2f2" transform="rotate(-15 12 15)" /><circle cx="7" cy="15" r="2.2" fill="#e2573c" /><circle cx="9" cy="10.5" r="1.8" fill="#6dbb4c" /><circle cx="12" cy="20" r="2.2" fill="#3a7bd5" /><circle cx="17" cy="18" r="2" fill="#8a5ac8" /><circle cx="12" cy="15" r="1.5" fill="#02050a" /><path d="M14 22L21 5" stroke="#e5983a" strokeWidth="2.2" /><path d="M20 8L19 2L24 2L23 7Z" fill="#a5673a" /></TaskIcon>
      <TaskIcon><path d="M9 3L23 4L18 23L2 20Z" fill="#6fb9c9" /><path d="M9 3L22 4L18 18L6 15Z" fill="#9bd5de" /><path d="M23 4L24 18L18 23Z" fill="#d8e8ea" /><path d="M2 20L9 14L18 23Z" fill="#447f90" /></TaskIcon>
      <TaskIcon><ellipse cx="13.5" cy="17" rx="6" ry="6.5" fill="#f5a623" /><path d="M8 17L10.500 15L12.500 17.500L15 14.500L19 17L15 19.500Z" fill="#e8251c" /><path d="M4.500 16C3.500 -1 23.500 -1 22.500 16" fill="none" stroke="#1420d8" strokeWidth="2.2" /><rect x="2" y="13" width="5" height="10" rx="2.5" fill="#1522dd" /><rect x="20" y="13" width="5" height="10" rx="2.5" fill="#1522dd" /></TaskIcon>
      <div className="flex-1" />
      <svg width="185" height="36" viewBox="1455 877 185 36" className="shrink-0" fill="none" stroke="#fff" strokeWidth="1.2">
        <circle cx="1471.5" cy="892" r="2.3" /><circle cx="1465.5" cy="897" r="2.3" /><path d="M1468.500 898C1469 894.500 1474.500 894.500 1475 898.500M1461.500 904C1462 899 1469 899 1469.500 904" />
        <path d="M1498.500 900L1504 894.500L1509.500 900" strokeWidth="1.4" />
        <path d="M1524.500 902C1519 902 1519.500 896.500 1523.500 896.500C1524 891.500 1530.500 891.500 1531.500 895.500C1537 895.500 1537.500 902 1533 902Z" fill="#fff" stroke="none" /><path d="M1525 902C1523 898 1528 896 1530 897.500" stroke="#02050a" strokeWidth="0.8" />
        <path d="M1549.500 892.500H1559.500V900.500H1547.500M1553.500 900.500V904M1550 904H1557.500M1545.500 891.500H1549.500V895.500H1545.500ZM1547.500 895.500V903" />
        <path d="M1569.500 895.500H1571.500L1575 892V903L1571.500 899.500H1569.500Z" />
        <path d="M1577.500 895C1579 896.500 1579 898.500 1577.500 900" /><path d="M1580 893C1582.500 895.500 1582.500 899.500 1580 902M1582.500 891C1586 894.500 1586 900.500 1582.500 904" stroke="#888" />
        <path d="M1593.500 904.500L1598.500 890.500L1603.500 904.500M1595.500 900H1601.500" strokeWidth="1.4" />
        <rect x="1621" y="890" width="14" height="14" fill="#fff" stroke="none" /><circle cx="1628" cy="897" r="5.800" fill="#222" stroke="none" /><path d="M1629.500 893.500V898.500C1629.500 901 1626.500 901 1626.500 899" strokeWidth="1.3" />
      </svg>
      <div className="flex w-[76px] shrink-0 flex-col items-center pt-[3px] font-['Open_Sans','Noto_Sans',sans-serif] text-[12px] leading-[17px] tracking-[-0.5px]">
        <span>12:10 PM</span><span>1/13/2019</span>
      </div>
      <svg width="42" height="36" viewBox="1717 877 42 36" className="shrink-0">
        <path d="M1722.500 888.500H1738.500V901.500H1729L1726 905V901.500H1722.500Z" fill="#fff" /><path d="M1725.500 892H1735.500M1725.500 895H1735.500M1725.500 898H1732" stroke="#111" strokeWidth="1.1" />
        <circle cx="1737.5" cy="904" r="8" fill="#333" stroke="#999" /><text x="1734.3" y="908" fontSize="11" fill="#fff" fontFamily="Open Sans, sans-serif">4</text>
      </svg>
      <div className="w-[3px] border-l border-[#888]" />
    </div>
  );
}

/* ---------- annotations ---------- */

const poly = (ox: number, oy: number, p: number[]) => {
  let s = "";
  for (let i = 0; i < p.length; i += 2) s += `${(ox + p[i] / 3).toFixed(1)},${(oy + p[i + 1] / 3).toFixed(1)} `;
  return s;
};

function Annotations() {
  return (
    <svg width="1762" height="913" className="pointer-events-none absolute left-0 top-0" fill="none">
      <g stroke="#ed1c24" strokeWidth="3.3" strokeLinejoin="round" strokeLinecap="round">
        <polyline points={poly(290, 260, [276, 188, 250, 181, 160, 182, 120, 190, 65, 225, 50, 240, 47, 290, 48, 340, 75, 400, 110, 440, 145, 458, 195, 468, 278, 468, 305, 440, 322, 410, 334, 370, 334, 290, 320, 250, 300, 215, 275, 188])} />
        <polyline points={poly(290, 260, [260, 70, 237, 88, 228, 115, 220, 150, 220, 222])} />
        <polyline points={poly(290, 260, [207, 213, 214, 221, 221, 225, 228, 221, 236, 210])} />
        <polyline points={poly(280, 460, [863, 43, 900, 55, 1010, 108, 1040, 135, 1060, 165, 1100, 210, 1122, 240, 1122, 260, 1115, 320, 1100, 355, 1075, 385, 1045, 423, 895, 425, 800, 410, 670, 410, 600, 418, 575, 427, 280, 427, 258, 420, 105, 400, 75, 375, 22, 295, 20, 230, 35, 195, 70, 172, 145, 150, 180, 148, 215, 140, 275, 127, 510, 125, 520, 130, 640, 131, 690, 134, 760, 147, 850, 158, 950, 168, 1000, 177, 1057, 188, 1056, 196])} />
        <polyline points={poly(1280, 420, [588, 130, 620, 130, 665, 135, 675, 142, 690, 143, 720, 175, 755, 215, 768, 240, 775, 258, 775, 345, 765, 385, 742, 440, 700, 485, 660, 515, 625, 535, 510, 535, 460, 527, 418, 515, 392, 480, 362, 405, 362, 335, 372, 285, 388, 250, 425, 216, 445, 210, 480, 190, 500, 182, 520, 180, 550, 167, 570, 163, 683, 163])} />
      </g>
      <g fill="#ed1c24" fontFamily="DejaVu Sans, sans-serif" fontSize="15">
        <text x="383" y="284.3" textLength="212" lengthAdjust="spacingAndGlyphs">this 16th note belongs to the</text>
        <text x="383" y="307.2" textLength="129" lengthAdjust="spacingAndGlyphs">previous measure</text>
        <text x="406.5" y="324.8" fontSize="11.2" textLength="191" lengthAdjust="spacingAndGlyphs">and the prev. 8th should be a 16th</text>
        <text x="371" y="496" textLength="163" lengthAdjust="spacingAndGlyphs">too many notes in this</text>
        <text x="371" y="519" textLength="68" lengthAdjust="spacingAndGlyphs">measure!</text>
      </g>
    </svg>
  );
}

export default function App() {
  return (
    <div className={`relative flex h-[913px] w-[1762px] flex-col overflow-hidden bg-black ${UI}`}>
      <div className="flex h-[877px]">
        <div className="flex w-[803px] shrink-0 flex-col border-b border-r border-[#1883d7] bg-[#e2e2e2]">
          <div className="flex h-[854px]">
            <div className="flex w-[26px] shrink-0 flex-col border-r border-[#c4c4c4]">
              <div className="mt-1 flex h-[111px] w-[25px] justify-end border border-l-0 border-[#808080] bg-[#f9f9f9] pr-[7px] pt-[14px] text-[17px] leading-6 text-[#8c8c8c]">
                <span className="tracking-[-0.7px]">???</span>
              </div>
              <div className="flex-1" />
              <div className="h-[22px] w-5 rounded-r-[3px] border border-l-0 border-[#a2a2a2] bg-[#f9f9f9]" />
              <div className="mt-[6px] flex h-6 w-5 items-center justify-center rounded-r-[3px] border border-l-0 border-[#999] bg-gradient-to-b from-[#e0e0e0] to-[#c4c4c4] pr-[2px] pt-[2px] text-[12px] text-[#333]">+</div>
            </div>
            <div className="w-[2px] shrink-0" />
            <Score />
            <div className="w-[2px] shrink-0" />
            <Inspector />
          </div>
          <div className="flex h-[22px] items-center justify-between whitespace-pre text-[11px] tracking-[0px] text-[#333]">
            <span className="-ml-[3px] pt-[4px]">n; Voice: 1;  Measure: 5; Beat: 1; Staff 1</span>
            <span className="flex items-center pt-[4px]">
              5:01:000
              <svg width="12" height="12" className="ml-[12px]" fill="#aaa">
                {[0, 1, 2, 3].flatMap((r) => Array.from({ length: r + 1 }, (_, c) => <rect key={`${r}-${c}`} x={9 - c * 3} y={r * 3} width="1.5" height="1.5" />))}
              </svg>
            </span>
          </div>
        </div>
        <Daw />
      </div>
      <Taskbar />
      <Annotations />
    </div>
  );
}
